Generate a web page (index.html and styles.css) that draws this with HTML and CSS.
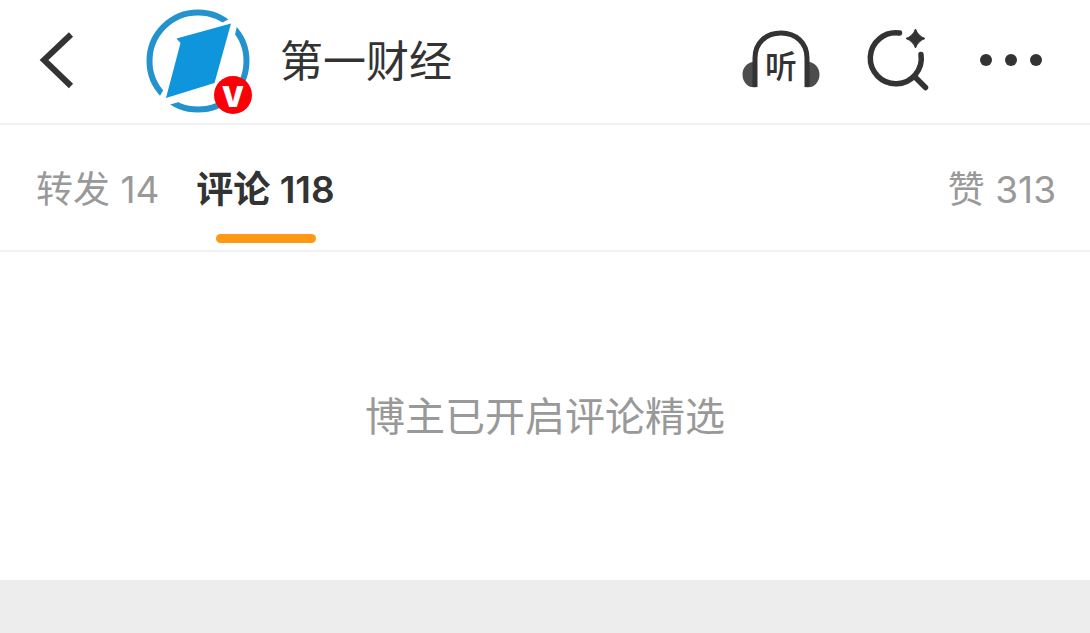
FILE: index.html
```html
<!DOCTYPE html>
<html lang="zh-CN">
<head>
    <meta charset="UTF-8">
    <meta name="viewport" content="width=device-width, initial-scale=1.0">
    <title>第一财经</title>
    <link rel="stylesheet" href="styles.css">
</head>
<body>

<header class="top-bar">
    <button type="button" class="icon-button back" aria-label="返回">
        <svg width="36" height="60" viewBox="0 0 36 60">
            <path d="M33 3.500L6 29L33 55" fill="none" stroke="#333" stroke-width="6"/>
        </svg>
    </button>

    <a href="#" class="author">
        <span class="avatar">
            <svg width="104" height="104" viewBox="0 0 104 104">
                <circle cx="52" cy="52" r="48.500" fill="none" stroke="#2493cd" stroke-width="6"/>
                <path d="M72 16L94 4L88 30Z M11 92L18 80L36 92L16 98Z" fill="#fff"/>
                <path d="M30.500 29.500L85 14.500L68.500 74L20 89L34.500 34Z" fill="#0f95dc"/>
            </svg>
            <span class="badge">V</span>
        </span>
        <span class="name">第一财经</span>
    </a>

    <div class="actions">
        <button type="button" class="icon-button" aria-label="听">
            <svg width="78" height="60" viewBox="0 0 78 60">
                <path d="M15 30.500C5 30 0.500 37 0.500 43.500S5 58 15 56Z M63 30.500C73 30 77.500 37 77.500 43.500S73 58 63 56Z" fill="#4d4d4d"/>
                <path d="M13 56V27C13 12 24 2 39 2S65 12 65 27V56" fill="none" stroke="#333" stroke-width="5"/>
                <text x="39" y="47" class="listen">听</text>
            </svg>
        </button>
        <button type="button" class="icon-button" aria-label="搜索">
            <svg width="64" height="62" viewBox="0 0 64 62">
                <path d="M31.500 3A25.500 25.500 0 1 0 53 24.500M46 46L57.500 57.500" fill="none" stroke="#333" stroke-width="5.500" stroke-linecap="round"/>
                <path d="M47.500 -1Q50 6 57 8.500Q50 11 47.500 18Q45 11 38 8.500Q45 6 47.500 -1Z" fill="#333" stroke="#333" stroke-linejoin="round"/>
            </svg>
        </button>
        <button type="button" class="icon-button" aria-label="更多">
            <svg width="62" height="14" viewBox="0 0 62 14">
                <g fill="#333">
                    <circle cx="6" cy="6" r="6"/>
                    <circle cx="31" cy="6" r="6"/>
                    <circle cx="56" cy="6" r="6"/>
                </g>
            </svg>
        </button>
    </div>
</header>

<nav class="tabs">
    <button type="button" class="tab">转发 14</button>
    <button type="button" class="tab active">评论 118</button>
    <button type="button" class="tab likes">赞 313</button>
</nav>

<main class="comments">
    <p>博主已开启评论精选</p>
</main>

</body>
</html>
```

FILE: styles.css
```css
* {
    box-sizing: border-box;
}

body {
    margin: 0;
    min-height: 100vh;
    background-color: #ededed;
    color: #333;
    font-family: Inter, "Noto Sans CJK SC", sans-serif;
}

button {
    padding: 0;
    border: none;
    background: none;
    color: inherit;
    font-family: inherit;
    cursor: pointer;
}

svg {
    display: block;
    overflow: visible;
}

.top-bar {
    display: flex;
    align-items: center;
    padding: 9px 48px 10px 38px;
    background-color: #fff;
    border-bottom: 2px solid #f2f2f2;
}

.author {
    display: flex;
    align-items: center;
    gap: 30px;
    margin-left: 72px;
    color: inherit;
    text-decoration: none;
}

.avatar {
    position: relative;
}

.badge {
    position: absolute;
    right: -2px;
    bottom: -1px;
    width: 38px;
    height: 38px;
    border-radius: 50%;
    background-color: #fb0007;
    color: #fff;
    font-size: 28px;
    font-weight: 900;
    line-height: 42px;
    text-align: center;
}

.name {
    font-size: 43px;
    line-height: 60px;
}

.actions {
    display: flex;
    align-items: center;
    gap: 48px;
    margin-left: auto;
}

.listen {
    fill: #333;
    font-size: 32px;
    font-weight: 500;
    text-anchor: middle;
}

.tabs {
    display: flex;
    gap: 37px;
    padding: 0 34px 0 36px;
    background-color: #fff;
    border-bottom: 2px solid #f2f2f2;
}

.tab {
    position: relative;
    padding: 37px 0 32px;
    color: #999;
    font-size: 37px;
    line-height: 56px;
}

.tab.active {
    color: #333;
    font-weight: 600;
}

.tab.active::after {
    content: "";
    position: absolute;
    left: 50%;
    bottom: 7px;
    width: 100px;
    height: 9px;
    margin-left: -50px;
    border-radius: 5px;
    background-color: #ff9913;
}

.likes {
    margin-left: auto;
}

.comments {
    padding: 135px 20px 133px;
    background-color: #fff;
    text-align: center;
}

.comments p {
    margin: 0;
    color: #999;
    font-size: 40px;
    line-height: 60px;
}
```
